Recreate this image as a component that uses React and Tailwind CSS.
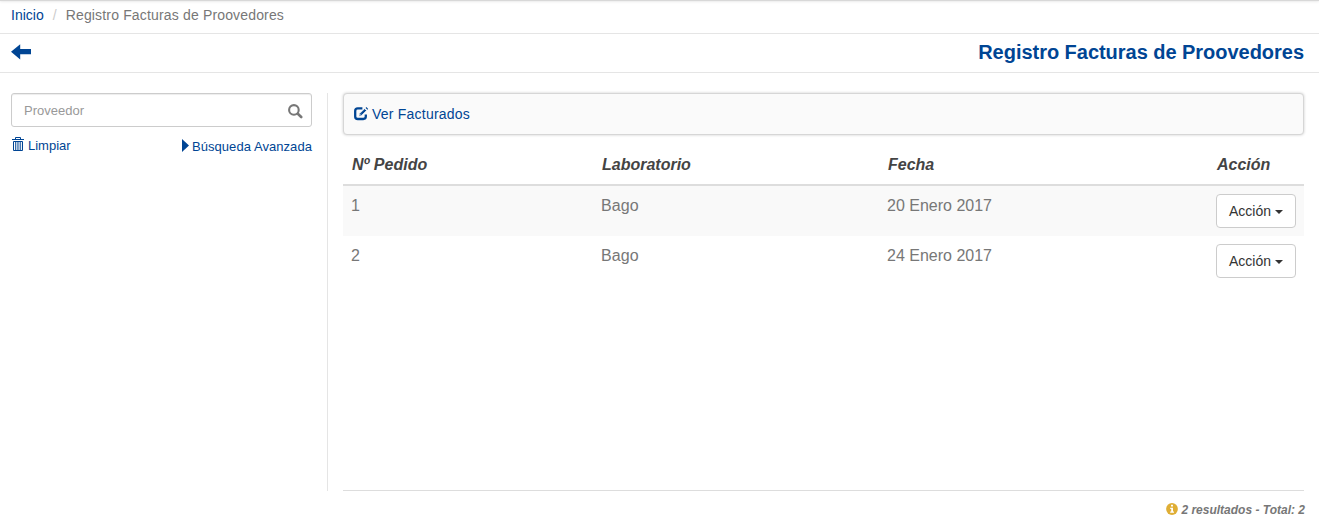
import React from "react";

const ArrowLeft = () => (
  <svg width="20" height="16" viewBox="0 0 20 16" fill="#004594">
    <path d="M0 7.8 9.2 0.2V5H20V10.2H9.2V15.6Z" />
  </svg>
);

const SearchIcon = () => (
  <svg width="15" height="15" viewBox="0 0 15 15" fill="none" stroke="#777" strokeLinecap="round">
    <circle cx="5.9" cy="5.9" r="4.8" strokeWidth="2.1" />
    <path d="M9.8 9.8 13.2 13" strokeWidth="2.6" />
  </svg>
);

const TrashIcon = () => (
  <svg width="12" height="15" viewBox="0 0 12 15" fill="none" stroke="#004594">
    <path d="M3.5 2.5V.5H8.5V2.5" />
    <path d="M0 2.5H12" />
    <path d="M1.5 4.5H10.5V13.5H1.5Z" />
    <path d="M3.5 5V13M5.2 5V13M6.9 5V13M8.6 5V13" strokeWidth=".8" />
  </svg>
);

const EditIcon = () => (
  <svg width="15" height="14" viewBox="0 0 15 14" fill="none" stroke="#004594">
    <path d="M8.4 1.4H3.8Q1.2 1.4 1.2 4V9.4Q1.2 12 3.8 12H9.2Q11.8 12 11.8 9.6V7.6" strokeWidth="2.3" />
    <path d="M4.9 9.3 5.6 6.6 10.6 1.7 12.5 3.6 7.5 8.6Z" fill="#004594" stroke="#fafafa" strokeWidth=".7" />
    <path d="M11.6.9 12.4.1 14.2 1.9 13.4 2.7Z" fill="#004594" stroke="none" />
    <path d="M6.4 7.8 7.4 6.8" stroke="#fafafa" strokeWidth=".7" />
  </svg>
);

const InfoIcon = () => (
  <svg width="12" height="12" viewBox="0 0 12 12">
    <circle cx="6" cy="6" r="5.9" fill="#dfae35" />
    <path d="M5 1.8H7V3.5H5ZM4.2 4.7H7V8.5H8V9.8H4.2V8.5H5.2V6H4.2Z" fill="#fff" />
  </svg>
);

const rows = [
  { id: 1, lab: "Bago", date: "20 Enero 2017" },
  { id: 2, lab: "Bago", date: "24 Enero 2017" },
];

const columns = "grid grid-cols-[250px_286px_329px_96px]";

function ActionButton() {
  return (
    <button className="flex h-[34px] w-20 items-center rounded border border-[#ccc] bg-white pl-3 text-[14px] leading-5 text-[#333]">
      <span className="w-[42px] whitespace-nowrap">Acción</span>
      <svg className="ml-1 mt-px" width="8" height="4" viewBox="0 0 8 4" fill="#333">
        <path d="M0 0H8L4 4Z" />
      </svg>
    </button>
  );
}

export default function App() {
  return (
    <div className="flex h-[525px] w-[1319px] flex-col overflow-hidden bg-white font-['Liberation_Sans',Arial,sans-serif] text-[#777]">
      <div className="h-px shrink-0 bg-[#d8d8d8] shadow-[0_0_3px_rgba(0,0,0,0.25)]" />
      <nav className="flex h-[33px] shrink-0 border-b border-[#e5e5e5] pl-[11px] pt-1 text-[14px] leading-5">
        <a className="text-[#004594]">Inicio</a>
        <span className="w-[22px] pl-[9px] text-[#ccc]">/</span>
        <span className="tracking-[0.16px]">Registro Facturas de Proovedores</span>
      </nav>
      <header className="flex h-[39px] shrink-0 justify-between border-b border-[#e5e5e5] pl-[11px] pr-[15px]">
        <a className="pt-[10px]"><ArrowLeft /></a>
        <h1 className="pt-[7px] text-[20px] font-bold leading-[22px] tracking-[-0.03px] text-[#004594]">Registro Facturas de Proovedores</h1>
      </header>
      <div className="flex flex-1 pt-5">
        <aside className="h-[398px] w-[328px] shrink-0 border-r border-[#e5e5e5] pl-[11px] pr-[15px]">
          <div className="flex h-[34px] items-center justify-between rounded-[3px] border border-[#ccc] pl-3 pr-2 text-[13px] text-[#999] shadow-[inset_0_1px_1px_rgba(0,0,0,0.075)]">
            <span className="pt-[2px]">Proveedor</span>
            <span className="pt-[3px]"><SearchIcon /></span>
          </div>
          <div className="flex justify-between text-[13px] leading-[18px] text-[#004594]">
            <a className="flex pt-[10px]">
              <span className="mr-1 pl-px"><TrashIcon /></span>
              Limpiar
            </a>
            <a className="flex pt-[11px]">
              <svg className="mr-[3px] mt-px" width="7" height="13" viewBox="0 0 7 13" fill="#004594">
                <path d="M0 0 7 6.5 0 13Z" />
              </svg>
              <span className="tracking-[0.06px]">Búsqueda Avanzada</span>
            </a>
          </div>
        </aside>
        <main className="ml-[15px] w-[961px]">
          <div className="flex h-[42px] rounded border border-[#d6d6d6] bg-[#fafafa] pl-[10px] pt-[10px] text-[14px] leading-5 text-[#004594] shadow-[0_0_3px_rgba(0,0,0,0.2)]">
            <span className="mr-[3px] pt-[3px]"><EditIcon /></span>
            <a className="tracking-[0.22px]">Ver Facturados</a>
          </div>
          <div className="h-[356px] border-b border-[#ddd] pt-[10px] text-[16px] leading-[22px]">
            <div className={`${columns} h-[41px] border-b-2 border-[#ddd] font-bold italic text-[#444]`}>
              <span className="pl-[9px] pt-[9px]">Nº Pedido</span>
              <span className="pl-[9px] pt-[9px]">Laboratorio</span>
              <span className="pl-[9px] pt-[9px]">Fecha</span>
              <span className="pl-[9px] pt-[9px]">Acción</span>
            </div>
            {rows.map((row) => (
              <div key={row.id} className={`${columns} h-[50px] odd:bg-white even:bg-[#f9f9f9]`}>
                <span className="pl-2 pt-[9px]">{row.id}</span>
                <span className="pl-2 pt-[9px] tracking-[0.1px]">{row.lab}</span>
                <span className="pl-2 pt-[9px]">{row.date}</span>
                <span className="pl-2 pt-2"><ActionButton /></span>
              </div>
            ))}
          </div>
          <footer className="-mr-px flex justify-end pt-[10px] text-[12px] font-bold italic leading-[18px]">
            <span className="mr-[3px] pt-[2px]"><InfoIcon /></span>
            2 resultados - Total: 2
          </footer>
        </main>
      </div>
    </div>
  );
}
